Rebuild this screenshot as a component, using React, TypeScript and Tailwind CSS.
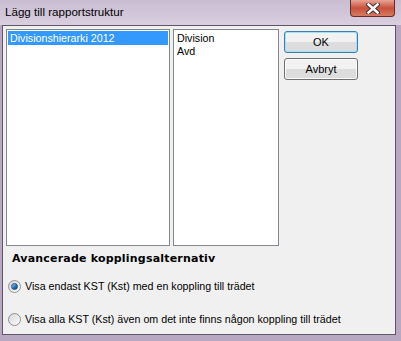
import { useState } from "react";

const ui = { fontFamily: '"Liberation Sans", Arial, sans-serif' };

function Radio({ checked }: { checked: boolean }) {
  return (
    <span className="relative flex h-[13px] w-[13px] shrink-0 items-center justify-center rounded-full border border-[#8f8f8f] bg-gradient-to-br from-[#d8d8d8] to-[#fbfbfb]">
      {checked && (
        <span className="h-[7px] w-[7px] rounded-full border border-[#1b4f82] bg-gradient-to-br from-[#9fd4f7] via-[#2a7ec9] to-[#0c3c78]" />
      )}
    </span>
  );
}

function Button({ label, focused }: { label: string; focused?: boolean }) {
  return (
    <button
      className={`h-[22px] w-[74px] rounded-[3px] border text-[11px] text-black ${
        focused
          ? "border-[#3c7fb1] shadow-[inset_0_0_0_1px_#9fe1f8]"
          : "border-[#707070] shadow-[inset_0_0_0_1px_#fbfbfb]"
      } bg-gradient-to-b from-[#f2f2f2] from-50% to-[#dddddd] to-50%`}
    >
      {label}
    </button>
  );
}

export default function App() {
  const [mode, setMode] = useState(0);

  return (
    <div className="flex h-[341px] w-[401px] flex-col bg-[#b9a8c2]" style={ui}>
      {/* title bar */}
      <div className="relative flex h-[25px] shrink-0 bg-gradient-to-b from-[#c9bdd2] to-[#d9cfdf]">
        <span className="pl-[5px] pt-[5px] text-[11.6px] leading-[14px] text-black">
          Lägg till rapportstruktur
        </span>
        <div className="absolute right-[6px] top-0 flex h-[17px] w-[45px] items-center justify-center rounded-b-[4px] border border-t-0 border-[#6b2a25] bg-gradient-to-b from-[#e8a494] via-[#c7503c] to-[#d57a61]">
          <svg width="14" height="11" viewBox="0 0 14 11">
            <path
              d="M2.5 1.5 L11.5 9.5 M11.5 1.5 L2.5 9.5"
              stroke="#3a2a2a"
              strokeWidth="4.4"
              strokeLinecap="square"
            />
            <path
              d="M2.5 1.5 L11.5 9.5 M11.5 1.5 L2.5 9.5"
              stroke="#ffffff"
              strokeWidth="2.6"
              strokeLinecap="square"
            />
          </svg>
        </div>
      </div>

      {/* client area */}
      <div className="ml-[2px] mr-[5px] flex h-[310px] flex-col border border-[#5f5668] bg-[#f0f0f0] text-[10.7px]">
        <div className="flex pl-[3px] pt-[3px]">
          <div className="h-[217px] w-[164px] border border-[#828790] bg-white p-px">
            <div className="h-[14px] bg-[#3399ff] pl-[2px] leading-[14px] text-white">
              Divisionshierarki 2012
            </div>
          </div>
          <div className="ml-[3px] h-[217px] w-[106px] border border-[#828790] bg-white pl-[3px] pt-[2px] leading-[13px] text-black">
            <div>Division</div>
            <div>Avd</div>
          </div>
          <div className="ml-[5px] flex flex-col gap-[5px] pt-[2px]">
            <Button label="OK" focused />
            <Button label="Avbryt" />
          </div>
        </div>

        <div
          className="ml-[9px] mt-[6px] text-[11px] font-bold leading-[14px] tracking-[0.2px] text-black"
          style={{ fontFamily: '"DejaVu Sans", Verdana, sans-serif' }}
        >
          Avancerade kopplingsalternativ
        </div>

        <label
          className="ml-[5px] mt-[14px] flex items-center gap-[4px] leading-[13px] text-black"
          onClick={() => setMode(0)}
        >
          <Radio checked={mode === 0} />
          Visa endast KST (Kst) med en koppling till trädet
        </label>
        <label
          className="ml-[5px] mt-[20px] flex items-center gap-[4px] leading-[13px] text-black"
          onClick={() => setMode(1)}
        >
          <Radio checked={mode === 1} />
          Visa alla KST (Kst) även om det inte finns någon koppling till trädet
        </label>
      </div>
    </div>
  );
}
